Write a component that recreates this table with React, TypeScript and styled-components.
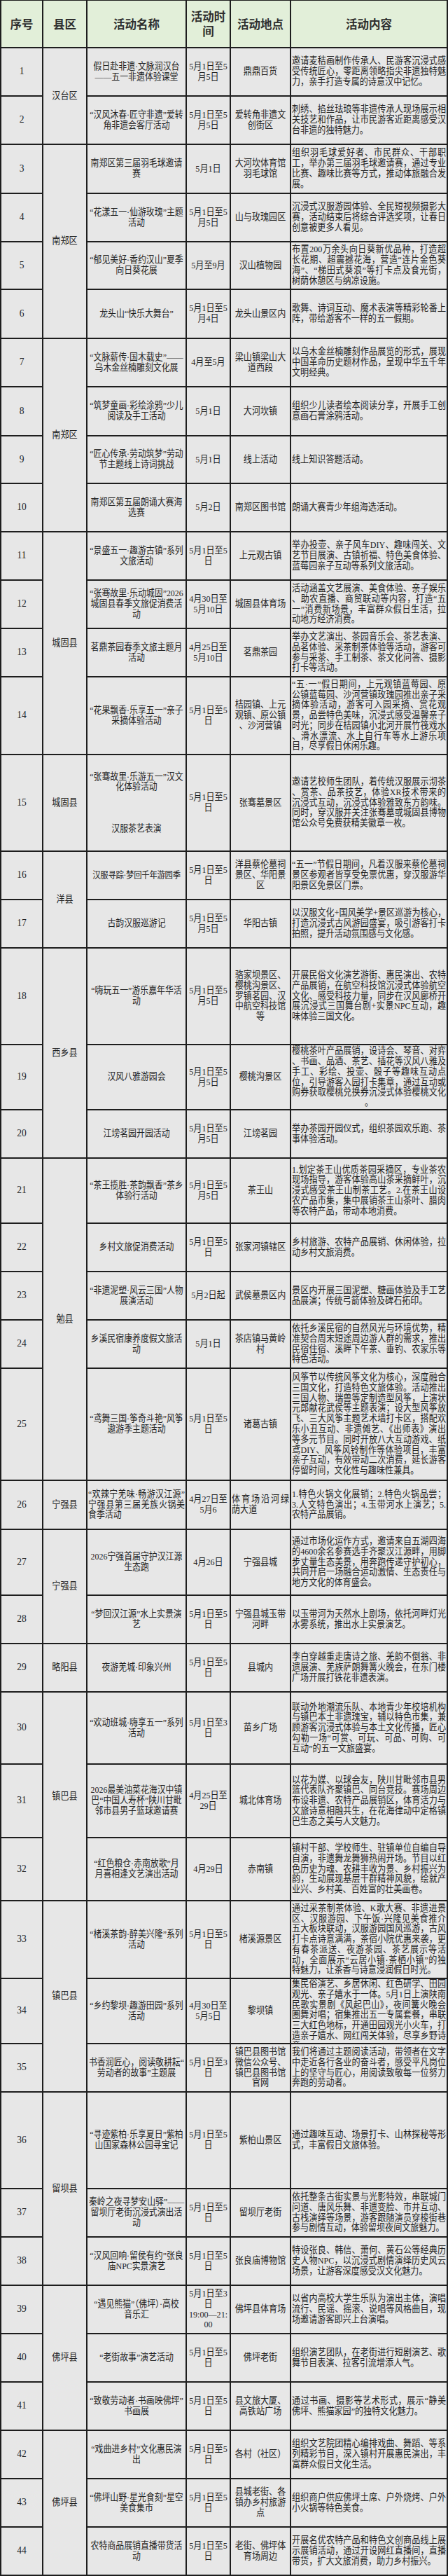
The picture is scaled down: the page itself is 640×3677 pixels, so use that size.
import React from "react";
import styled, { createGlobalStyle, css } from "styled-components";

const GlobalStyle = createGlobalStyle`
  html, body { margin: 0; padding: 0; background: #ffffff; }
  #root { width: 640px; }
`;

type Row = {
  h: number;
  county?: [string, number];
  name: string[];
  nameLeft?: boolean;
  nameTight?: boolean;
  time: string[];
  place: string[];
  placeLeft?: boolean;
  content: string[];
};

const D55 = ["5月1日至5", "月5日"];
const D5 = ["5月1日至5", "日"];

const rows: Row[] = [
  { h: 67, county: ["汉台区", 2], name: ["假日赴非遗·文脉润汉台", "——五一非遗体验课堂"], time: D55, place: ["鼎鼎百货"], content: ["邀请麦秸画制作传承人、民游客沉浸式感", "受传统匠心，零距离领略指尖非遗独特魅", "力，亲手打造专属的诗意汉中记忆。"] },
  { h: 67, name: ["“汉风沐春·匠守非遗”爱转", "角非遗会客厅活动"], time: D55, place: ["爱转角非遗文", "创街区"], content: ["刺绣、掐丝珐琅等非遗传承人现场展示相", "关技艺和作品，让市民游客近距离感受汉", "台非遗的独特魅力。"] },
  { h: 68, county: ["南郑区", 4], name: ["南郑区第三届羽毛球邀请", "赛"], time: ["5月1日"], place: ["大河坎体育馆", "羽毛球馆"], content: ["组织羽毛球爱好者、市民群众、干部职", "工，举办第三届羽毛球邀请赛，通过专业", "比赛、趣味比赛等方式，推动体旅融合发", "展。"] },
  { h: 67, name: ["“花漾五一·仙游玫瑰”主题", "活动"], time: D55, place: ["山与玫瑰园区"], content: ["沉浸式汉服游园体验、全民短视频摄影大", "赛，活动结束后将综合评选奖项，让春日", "创意被更多人看见。"] },
  { h: 66, name: ["“郁见美好·香约汉山”夏季", "向日葵花展"], time: ["5月至9月"], place: ["汉山植物园"], content: ["布置200万余头向日葵新优品种，打造超", "长花期、超震撼花海，营造“连片金色葵", "海”、“梯田式葵浪”等打卡点及食光街，", "树荫休憩区与纳凉设施。"] },
  { h: 68, name: ["龙头山“快乐大舞台”"], time: ["5月1日至5", "月4日"], place: ["龙头山景区内"], content: ["歌舞、诗词互动、魔术表演等精彩轮番上", "阵，带给游客不一样的五一假期。"] },
  { h: 67, county: ["南郑区", 4], name: ["“文脉薪传·国木载史”——", "乌木金丝楠雕刻文化展"], time: ["4月至5月"], place: ["梁山镇梁山大", "道西段"], content: ["以乌木金丝楠雕刻作品展览的形式，展现", "中国革命历史题材作品，呈现中华五千年", "文明经典。"] },
  { h: 68, name: ["“筑梦童画·彩绘涂鸦”少儿", "阅读及手工活动"], time: ["5月1日"], place: ["大河坎镇"], content: ["组织少儿读者绘本阅读分享，开展手工创", "意画石膏涂鸦活动。"] },
  { h: 66, name: ["“匠心传承·劳动筑梦”劳动", "节主题线上诗词挑战"], time: ["5月1日"], place: ["线上活动"], content: ["线上知识答题活动。"] },
  { h: 67, name: ["南郑区第五届朗诵大赛海", "选赛"], time: ["5月2日"], place: ["南郑区图书馆"], content: ["朗诵大赛青少年组海选活动。"] },
  { h: 67, county: ["城固县", 4], name: ["“景盛五一·趣游古镇”系列", "文旅活动"], time: D5, place: ["上元观古镇"], content: ["举办投壶、亲子风车DIY、趣味闯关、文", "艺节目展演、古镇祈福、特色美食体验、", "蓝莓园亲子互动等系列文旅活动。"] },
  { h: 67, name: ["“张骞故里·乐动城固”2026", "城固县春季文旅促消费活", "动"], time: ["4月30日至", "5月10日"], place: ["城固县体育场"], content: ["活动涵盖文艺展演、美食体验、亲子娱乐", "、助农直播、商贸联动等内容，打造“五", "一”消费新场景，丰富群众假日生活，拉", "动地方经济消费。"] },
  { h: 67, name: ["茗鼎茶园春季文旅主题月", "活动"], time: ["4月25日至", "5月10日"], place: ["茗鼎茶园"], content: ["举办文艺演出、茶园音乐会、茶艺表演、", "品茗体验、采茶制茶体验等活动，游客可", "参与采茶、手工制茶、茶文化问答、摄影", "打卡等活动。"] },
  { h: 109, name: ["“花果飘香·乐享五一”亲子", "采摘体验活动"], time: D5, place: ["桔园镇、上元", "观镇、原公镇", "、沙河营镇"], content: ["“五·一”假日期间，上元观镇蓝莓园、原", "公镇蓝莓园、沙河营镇玫瑰园推出亲子采", "摘体验活动，游客可入园采摘、赏花观", "景，品尝特色美味，沉浸式感受温馨亲子", "时光；同步在桔园镇小北河开展竹筏戏水", "、滑水漂流、水上自行车等水上游乐项", "目，尽享假日休闲乐趣。"] },
  { h: 136, county: ["城固县", 1], name: ["“张骞故里·乐游五一”汉文", "化体验活动", "", "", "", "汉服茶艺表演"], time: D5, place: ["张骞墓景区"], content: ["邀请艺校师生团队，着传统汉服展示沏茶", "、赏茶、品茶技艺，体验XR技术带来的", "沉浸式互动，沉浸式体验雅致东方韵味。", "同时，穿汉服并关注张骞墓或城固县博物", "馆公众号免费获精美徽章一枚。"] },
  { h: 67, county: ["洋县", 2], name: ["汉服寻踪·梦回千年游园季"], nameTight: true, time: D5, place: ["洋县蔡伦墓祠", "景区、华阳景", "区"], content: ["“五一”节假日期间，凡着汉服来蔡伦墓祠", "景区参观者皆享受免票优惠，穿汉服游华", "阳景区免景区门票。"] },
  { h: 67, name: ["古韵汉服巡游记"], time: D55, place: ["华阳古镇"], content: ["以汉服文化+国风美学+景区巡游为核心，", "打造沉浸式古风游园盛宴，吸引游客打卡", "拍照，提升活动氛围感与文化感。"] },
  { h: 136, county: ["西乡县", 3], name: ["“嗨玩五一”游乐嘉年华活", "动"], time: D55, place: ["骆家坝景区、", "樱桃沟景区、", "罗镇茗园、汉", "中航空科技馆", "等"], content: ["开展民俗文化演艺游街、惠民演出、农特", "产品展销，在航空科技馆沉浸式体验航空", "文化、感受科技力量，同步在汉风廊桥开", "展沉浸式三国舞台剧+实景NPC互动，趣", "味体验三国文化。"] },
  { h: 91, name: ["汉风八雅游园会"], time: D55, place: ["樱桃沟景区"], content: ["樱桃茶叶产品展销，设诗会、琴音、对弈", "、书画、品酒、茶艺、插花等汉风八雅及", "手工、彩绘、投壶、骰子等趣味互动点", "位，引导游客入园打卡集章，通过互动或", "购券获取樱桃兑换券沉浸式体验樱桃文化", "。"] },
  { h: 67, name: ["江塝茗园开园活动"], time: D55, place: ["江塝茗园"], content: ["举办茶园开园仪式，组织茶园欢乐跑、茶", "事体验活动。"] },
  { h: 91, county: ["勉县", 5], name: ["“茶王揽胜·茶韵飘香”茶乡", "体验行活动"], time: D55, place: ["茶王山"], content: ["1.划定茶王山优质茶园采摘区，专业茶农", "现场指导，游客体验高山茶采摘鲜叶，沉", "浸式感受茶王山制茶工艺。2.在茶王山设", "农产品市集，集中展销茶王山茶叶、腊肉", "等农特产品，带动本地消费。"] },
  { h: 67, name: ["乡村文旅促消费活动"], time: D5, place: ["张家河镇辖区"], content: ["乡村旅游、农特产品展销、休闲体验，拉", "动乡村文旅消费。"] },
  { h: 67, name: ["“非遗泥塑·风云三国”人物", "展演活动"], time: ["5月2日起"], place: ["武侯墓景区内"], content: ["景区内开展三国泥塑、糖画体验及手工艺", "品展演；传统弓箭体验及碑石拓印。"] },
  { h: 67, name: ["乡溪民宿康养度假文旅活", "动"], time: ["5月1日"], place: ["茶店镇马黄岭", "村"], content: ["依托乡溪民宿的自然风光与环境优势，精", "准契合周末短途周边游人群的需求，推出", "民宿住宿、溪畔下午茶、垂钓、农家乐等", "特色活动。"] },
  { h: 158, name: ["“鸢舞三国·筝奇斗艳”风筝", "遨游季主题活动"], time: D5, place: ["诸葛古镇"], content: ["风筝节以传统风筝文化为核心，深度融合", "三国文化，打造特色文旅体验。活动推出", "三国人物、瑞兽等定制造型风筝，上演状", "元郎献花武侯等主题表演；设大型风筝放", "飞、三大风筝主题艺术墙打卡区，搭配欢", "乐小丑互动、非遗傩艺、《出师表》演出", "等多元节目。同时开放八大互动游戏、纸", "鸢DIY、风筝风铃制作等体验项目，丰富", "亲子互动，有效带动二次消费，延长游客", "停留时间，文化性与趣味性兼具。"] },
  { h: 68, county: ["宁强县", 1], name: ["“欢辣宁羌味·畅游汉江源”", "宁强县第三届羌族火锅美", "食季活动"], nameLeft: true, time: ["4月27日至", "5月6"], place: ["体育场沿河绿", "荫大道"], placeLeft: true, content: ["1.特色火锅文化展销；2.特色火锅品尝；", "3.人文特色演出；4.玉带河水上演艺；5.", "农特产品展销。"] },
  { h: 92, county: ["宁强县", 2], name: ["2026宁强首届守护汉江源", "生态跑"], time: ["4月26日"], place: ["宁强县城"], content: ["通过市场化运作方式，邀请来自五湖四海", "的4600余名参赛选手齐聚汉江源畔，用脚", "步丈量生态美景，用奔跑传递守护初心，", "共同开启一场融合运动激情、生态责任与", "地方文化的体育盛会。"] },
  { h: 67, name: ["“梦回汉江源”水上实景演", "艺"], time: D5, place: ["宁强县城玉带", "河畔"], content: ["以玉带河为天然水上剧场，依托河畔灯光", "水雾系统，推出水上实景演艺。"] },
  { h: 67, county: ["略阳县", 1], name: ["夜游羌城·印象兴州"], time: D5, place: ["县城内"], content: ["李白穿越重走唐诗之旅、羌韵不倒翁、非", "遗展演、羌族萨朗舞篝火晚会，在东门楼", "广场开展打铁花非遗表演。"] },
  { h: 101, county: ["镇巴县", 3], name: ["“欢动班城·嗨享五一”系列", "活动"], time: ["5月1日至3", "日"], place: ["苗乡广场"], content: ["联动外地潮流乐队、本地青少年校培机构", "与镇巴本土非遗瑰宝，辅以特色市集，兼", "顾游客沉浸式体验与本土文化传播，匠心", "勾勒一场“可赏、可玩、可品、可购、可", "互动”的五一文旅盛宴。"] },
  { h: 103, name: ["2026最美油菜花海汉中镇", "巴“中国人寿杯”陕川甘毗", "邻市县男子篮球邀请赛"], time: ["4月25日至", "29日"], place: ["城北体育场"], content: ["以花为媒、以球会友，陕川甘毗邻市县男", "篮代表队齐聚镇巴、同台竞技。赛场周边", "布设非遗、农特产品展销区，体育活力与", "文旅诗意相融共生，在花海律动中定格镇", "巴生态之美与人文魅力。"] },
  { h: 88, name: ["“红色粮仓·赤南放歌”月", "月喜相逢文艺演出活动"], time: ["4月29日"], place: ["赤南镇"], content: ["镇村干部、学校师生、驻镇单位自编自导", "自演，非遗舞龙舞狮热闹开场。节目以红", "色历史为魂、农耕丰收为景、乡村振兴为", "韵，生动展现基层干群精神风貌，绘就产", "业兴、乡村美、百姓富的壮美画卷。"] },
  { h: 109, county: ["镇巴县", 3], name: ["“楮溪茶韵·醉美兴隆”系列", "活动"], time: D5, place: ["楮溪源景区"], content: ["通过采茶制茶体验、K歌大赛、非遗进景", "区、汉服游园、下午饭·兴隆见美食推介", "五大板块联动，汉服游园国风巡游，古风", "打卡点诗意满满，茶宿小院优惠来袭，更", "有春茶派送、夜游茶园、茶艺展示等活", "动，全面展示“云居小镇·茶栖小镇”的独", "特魅力，让茶香与诗意浸润假日时光。"] },
  { h: 91, name: ["“乡约黎坝·趣游田园”系列", "活动"], time: ["4月30日至", "5月5日"], place: ["黎坝镇"], content: ["集民俗演艺、乡居休闲、红色研学、田园", "观光、亲子嬉水于一体。5月1日上演陕南", "民歌实景剧《风起巴山》，夜间篝火晚会", "圈舞对唱；宿集推出五一专属套餐，串联", "三大红色地标，开通田园观光小火车，打", "造亲子嬉水、网红闯关体验，尽享乡野诗", "意。"] },
  { h: 67, name: ["书香润匠心，阅读敬耕耘“", "劳动者的故事”主题展"], time: ["5月1日至3", "日"], place: ["镇巴县图书馆", "微信公众号、", "镇巴县图书馆", "官网"], content: ["我们将通过主题阅读活动，带领者在文字", "中走近各行各业的奋斗者，感受平凡岗位", "上的坚守与匠心，用阅读致敬每一位努力", "奔跑的劳动者。"] },
  { h: 136, county: ["留坝县", 3], name: ["“寻迹紫柏·乐享夏日”紫柏", "山国家森林公园寻宝记"], time: D5, place: ["紫柏山景区"], content: ["通过趣味互动、场景打卡、山林探秘等形", "式，丰富假日文旅体验。"] },
  { h: 67, name: ["秦岭之夜寻梦安山驿”——", "留坝厅老街沉浸式演出活", "动"], time: D5, place: ["留坝厅老街"], content: ["依托整条古街实景与光影特效，串联城门", "问道、唐风乐舞、非遗变脸、市井互动、", "古栈演绎等场景，游客跟随演员穿梭街巷", "参与剧情互动，体验留坝夜间文旅魅力。"] },
  { h: 67, name: ["“汉风回响·留侯有约”张良", "庙NPC实景演艺"], time: D5, place: ["张良庙博物馆"], content: ["特设张良、韩信、萧何、黄石公等经典历", "史人物NPC，以沉浸式剧情演绎历史风云", "场景，让游客深度感受汉文化魅力。"] },
  { h: 67, county: ["佛坪县", 3], name: ["“遇见熊猫”（佛坪）·高校", "音乐汇"], time: ["5月1日至3", "日", "19:00—21:", "00"], place: ["佛坪县体育场"], content: ["以省内高校大学生乐队为演出主体，演唱", "流行、民谣、摇滚、说唱等风格曲目，现", "场邀请游客即兴上台演唱。"] },
  { h: 67, name: ["“老街故事”演艺活动"], time: D5, place: ["佛坪老街"], content: ["组织演艺团队，在老街进行短剧演艺、歌", "舞节目表演、拉客引流增添人气。"] },
  { h: 67, name: ["“致敬劳动者·书画映佛坪”", "书画展"], time: D5, place: ["县文旅大厦、", "高铁站广场"], content: ["通过书画、摄影等艺术形式，展示“静美", "佛坪、熊猫家园”的独特文化魅力。"] },
  { h: 67, county: ["佛坪县", 3], name: ["“戏曲进乡村”文化惠民演", "出"], time: D5, place: ["各村（社区）"], content: ["组织文艺院团精心编排戏曲、舞蹈、等系", "列精彩节目，深入镇村开展惠民演出，丰", "富群众假日文化生活。"] },
  { h: 67, name: ["“佛坪山野·星光食刻”星空", "美食集市"], time: D5, place: ["县城老街、各", "镇办乡村旅游", "点"], content: ["组织商户供应佛坪土席、户外烧烤、户外", "小火锅等特色美食。"] },
  { h: 67, name: ["农特商品展销直播带货活", "动"], time: D5, place: ["老街、佛坪体", "育场周边"], content: ["开展名优农特产品和特色文创商品线上展", "示展销活动，通过开设网红直播间，直播", "带货，扩大文旅消费，助力乡村振兴。"] },
];

const Table = styled.div<{ $rows: string }>`
  display: grid;
  grid-template-columns: 58px 61px 140px 61px 84px 222px;
  grid-template-rows: ${(p) => p.$rows};
  gap: 2px;
  padding: 1px 2px 2px 2px;
  width: 640px;
  box-sizing: border-box;
  background: #1e1e1e;
`;

const HeadCell = styled.div<{ $col: number }>`
  grid-column: ${(p) => p.$col};
  background: #e2efd9;
  display: flex;
  flex-direction: column;
  align-items: center;
  justify-content: center;
  font-family: "Noto Sans CJK SC", sans-serif;
  font-weight: 700;
  font-size: 16.5px;
  line-height: 21px;
  color: #2e2e2e;
  overflow: hidden;
`;

const bodyCell = css`
  background: #e7e7e7;
  display: flex;
  flex-direction: column;
  justify-content: safe center;
  overflow: hidden;
  font-family: "Liberation Serif", "Noto Sans CJK SC", serif;
  font-size: 12.1px;
  color: #232323;
  box-sizing: border-box;
  min-width: 0;
`;

const SeqCell = styled.div`
  ${bodyCell};
  grid-column: 1;
  align-items: center;
  font-size: 13.5px;
`;

const CountyCell = styled.div<{ $span: number }>`
  ${bodyCell};
  grid-column: 2;
  grid-row: span ${(p) => p.$span};
  align-items: center;
`;

const NameCell = styled.div<{ $left?: boolean; $tight?: boolean }>`
  ${bodyCell};
  grid-column: 3;
  align-items: ${(p) => (p.$left ? "stretch" : "center")};
  font-size: ${(p) => (p.$tight ? "11.4px" : "11.9px")};
  letter-spacing: ${(p) => (p.$tight ? "-0.3px" : "0")};
  padding: 0 1px;
`;

const TimeCell = styled.div`
  ${bodyCell};
  grid-column: 4;
  align-items: center;
`;

const PlaceCell = styled.div<{ $left?: boolean }>`
  ${bodyCell};
  grid-column: 5;
  align-items: ${(p) => (p.$left ? "stretch" : "center")};
  padding: 0 1px;
`;

const ContentCell = styled.div`
  ${bodyCell};
  grid-column: 6;
  align-items: stretch;
  padding: 0 1px 0 1px;
`;

const Line = styled.div<{ $justify?: boolean; $center?: boolean }>`
  flex-shrink: 0;
  height: 14.8px;
  line-height: 14.8px;
  white-space: nowrap;
  transform: scaleY(1.1);
  text-align: ${(p) => (p.$center ? "center" : "left")};
  text-align-last: ${(p) => (p.$justify ? "justify" : p.$center ? "center" : "left")};
`;

const CenterLines = ({ lines }: { lines: string[] }) => (
  <>
    {lines.map((l, i) => (
      <Line key={i} $center>
        {l || "\u00a0"}
      </Line>
    ))}
  </>
);

const JustifiedLines = ({ lines }: { lines: string[] }) => (
  <>
    {lines.map((l, i) => {
      const last = i === lines.length - 1;
      const lone = l === "。";
      return (
        <Line key={i} $justify={!last} $center={lone}>
          {l}
        </Line>
      );
    })}
  </>
);

export default function App() {
  const template = ["66px", ...rows.map((r) => `${r.h}px`)].join(" ");
  return (
    <>
      <GlobalStyle />
      <Table $rows={template}>
        <HeadCell $col={1}>序号</HeadCell>
        <HeadCell $col={2}>县区</HeadCell>
        <HeadCell $col={3}>活动名称</HeadCell>
        <HeadCell $col={4}>
          <div>活动时</div>
          <div>间</div>
        </HeadCell>
        <HeadCell $col={5}>活动地点</HeadCell>
        <HeadCell $col={6}>活动内容</HeadCell>
        {rows.map((r, i) => (
          <React.Fragment key={i}>
            <SeqCell>
              <Line $center>{i + 1}</Line>
            </SeqCell>
            {r.county && (
              <CountyCell $span={r.county[1]}>
                <Line $center>{r.county[0]}</Line>
              </CountyCell>
            )}
            <NameCell $left={r.nameLeft} $tight={r.nameTight}>
              {r.nameLeft ? <JustifiedLines lines={r.name} /> : <CenterLines lines={r.name} />}
            </NameCell>
            <TimeCell>
              <CenterLines lines={r.time} />
            </TimeCell>
            <PlaceCell $left={r.placeLeft}>
              {r.placeLeft ? <JustifiedLines lines={r.place} /> : <CenterLines lines={r.place} />}
            </PlaceCell>
            <ContentCell>
              <JustifiedLines lines={r.content} />
            </ContentCell>
          </React.Fragment>
        ))}
      </Table>
    </>
  );
}
